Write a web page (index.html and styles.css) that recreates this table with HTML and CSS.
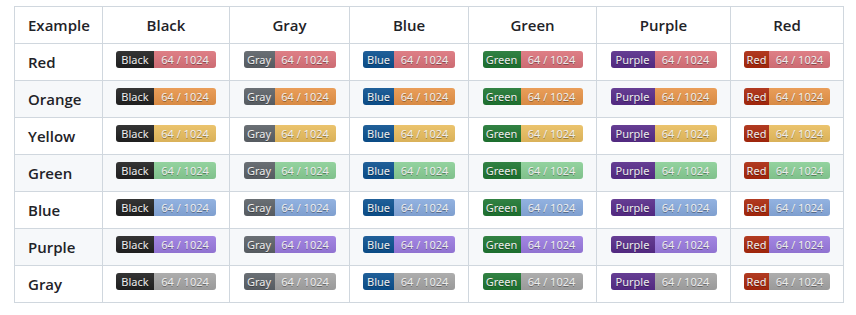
FILE: index.html
```html
<!DOCTYPE html>
<html lang="en">
<head>
<meta charset="utf-8">
<title>Badges</title>
<link rel="stylesheet" href="styles.css">
</head>
<body>
<table class="grid">
  <colgroup>
    <col class="c1"><col class="c2"><col class="c3"><col class="c4"><col class="c5"><col class="c6"><col class="c7">
  </colgroup>
  <thead>
    <tr><th class="first">Example</th><th>Black</th><th>Gray</th><th>Blue</th><th>Green</th><th>Purple</th><th>Red</th></tr>
  </thead>
  <tbody id="rows"></tbody>
</table>
<script src="script.js"></script>
</body>
</html>
```
FILE: styles.css
```css
html, body {
  margin: 0;
  padding: 0;
  background: #ffffff;
}
body {
  padding: 6px 14px;
  font-family: "Open Sans", "Noto Sans", sans-serif;
  font-size: 15px;
  line-height: 24px;
  color: #1f2328;
}
.grid {
  border-collapse: collapse;
  table-layout: fixed;
  width: 829px;
}
.c1 { width: 88px; }
.c2 { width: 127px; }
.c3 { width: 120px; }
.c4 { width: 119px; }
.c5 { width: 128px; }
.c6 { width: 134px; }
.c7 { width: 113px; }
.grid th, .grid td {
  border: 1px solid #d0d7de;
  padding: 6px 13px;
  text-align: center;
  height: 24px;
  vertical-align: top;
}
.grid th { font-weight: 600; }
.grid .first { text-align: left; font-weight: 600; }
.grid tbody tr:nth-child(2n) { background: #f6f8fa; }
.badge {
  display: inline-flex;
  vertical-align: top;
  margin-top: 1px;
  height: 17px;
  border-radius: 3px;
  overflow: hidden;
  font-family: "Noto Sans", "DejaVu Sans", sans-serif;
  font-size: 11px;
  line-height: 17px;
  color: #fff;
  text-shadow: 0 1px 0 rgba(0, 0, 0, 0.35);
  position: relative;
}
.badge::after {
  content: "";
  position: absolute;
  inset: 0;
  background: linear-gradient(to bottom, rgba(187, 187, 187, 0.12), rgba(0, 0, 0, 0.1));
  pointer-events: none;
}
.badge span { display: block; text-align: center; }
.lbl-black { width: 38px; background: #222222; }
.lbl-gray { width: 31px; background: #5f656b; }
.lbl-blue { width: 31px; background: #0b5394; }
.lbl-green { width: 38px; background: #1f7a33; }
.lbl-purple { width: 44px; background: #5a2d8e; }
.lbl-red { width: 25px; background: #b0290c; }
.val { width: 62px; }
.val-red { background: #e3777f; }
.val-orange { background: #f09a4c; }
.val-yellow { background: #f2c563; }
.val-green { background: #8ed69b; }
.val-blue { background: #8db1e6; }
.val-purple { background: #a07fe8; }
.val-gray { background: #ababab; }
```
FILE: script.js
```js
const rows = ["Red", "Orange", "Yellow", "Green", "Blue", "Purple", "Gray"];
const cols = ["Black", "Gray", "Blue", "Green", "Purple", "Red"];
const valWidth = { Black: 62, Gray: 61, Blue: 61, Green: 62, Purple: 62, Red: 61 };
const tbody = document.getElementById("rows");
for (const r of rows) {
  const tr = document.createElement("tr");
  const th = document.createElement("td");
  th.className = "first";
  th.textContent = r;
  tr.appendChild(th);
  for (const c of cols) {
    const td = document.createElement("td");
    const b = document.createElement("span");
    b.className = "badge";
    const l = document.createElement("span");
    l.className = "lbl-" + c.toLowerCase();
    l.textContent = c;
    const v = document.createElement("span");
    v.className = "val val-" + r.toLowerCase();
    v.style.width = valWidth[c] + "px";
    v.textContent = "64 / 1024";
    b.appendChild(l);
    b.appendChild(v);
    td.appendChild(b);
    tr.appendChild(td);
  }
  tbody.appendChild(tr);
}
```
